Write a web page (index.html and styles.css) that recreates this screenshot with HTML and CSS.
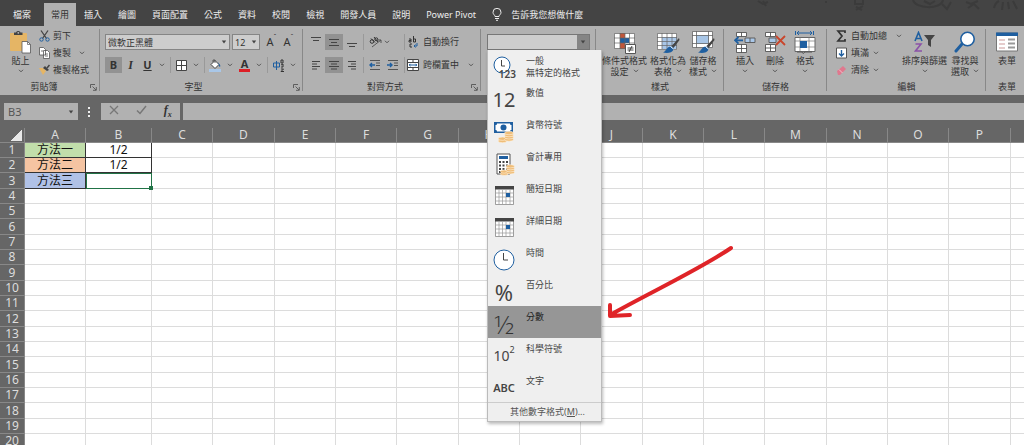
FILE: index.html
```html
<!DOCTYPE html>
<html lang="zh-Hant">
<head>
<meta charset="utf-8">
<meta name="viewport" content="width=device-width, initial-scale=1">
<title>試算表</title>
<link rel="stylesheet" href="styles.css">
</head>
<body>
<svg class="defs" aria-hidden="true">
  <symbol id="caret" viewBox="0 0 6 4"><path d="M1 .8l2 2 2-2" fill="none" stroke="#555" stroke-width="1"/></symbol>
  <symbol id="solid-caret" viewBox="0 0 6 4"><path d="M.8.6h4.4L3 3.4z" fill="#444"/></symbol>
  <symbol id="launcher" viewBox="0 0 7 7"><path d="M.5 4V.5H5M2.5 2.5l3.5 3.5M6.300 3v3.300H3" fill="none" stroke="#555" stroke-width=".9"/></symbol>
  <symbol id="coins" viewBox="0 0 16 12"><g fill="#efbd78" stroke="#fff1dc" stroke-width=".6"><ellipse cx="4.500" cy="10" rx="4.200" ry="1.700"/><ellipse cx="4.500" cy="7.700" rx="4.200" ry="1.700"/><ellipse cx="11" cy="8.500" rx="4.400" ry="1.700"/><ellipse cx="11" cy="6.300" rx="4.400" ry="1.700"/><ellipse cx="11" cy="4.100" rx="4.400" ry="1.700"/><ellipse cx="11" cy="2" rx="4.400" ry="1.700"/></g></symbol>
  <symbol id="calendar" viewBox="0 0 19 19"><path d="M.5.5h18v18H.5z" fill="#fff" stroke="#777" stroke-width=".7"/><path d="M0 0h19v3.500H0z" fill="#444"/><path d="M4 4v14M7.500 4v14M11 4v14M15 4v14M1 7h17M1 11h17M1 15h17" stroke="#999" stroke-width=".7"/><path d="M11 7h4v4h-4z" fill="#1f5fa0"/></symbol>
  <symbol id="brush" viewBox="0 0 18 17"><path d="M17 1l-7.500 8 2 2L17.500 3z" fill="#444"/><path d="M9 9.500c1.500 0 3 1.500 2.500 3C10.500 16 5 16.500 1 15.500c3-1 3.500-6 8-6z" fill="#1f5fa0"/><path d="M8.500 9.500l3 2.500" stroke="#fff" stroke-width="1"/></symbol>
</svg>

<header class="titlebar">
  <nav class="tabs" aria-label="功能區索引標籤">
    <button class="tab tab-file">檔案</button><button class="tab tab-active">常用</button><button class="tab">插入</button><button class="tab">繪圖</button><button class="tab">頁面配置</button><button class="tab">公式</button><button class="tab">資料</button><button class="tab">校閱</button><button class="tab">檢視</button><button class="tab">開發人員</button><button class="tab">說明</button><button class="tab">Power Pivot</button>
    <button class="tab tell"><svg width="10" height="13" viewBox="0 0 10 13" fill="none" stroke="#eee"><path d="M3 8.500C3 7 1 6.500 1 4.300a4 4 0 018 0C9 6.500 7 7 7 8.500zM3 10.500h4M4 12.300h2"/></svg>告訴我您想做什麼</button>
  </nav>
  <svg class="doodles" width="270" height="12" viewBox="0 0 270 12" fill="none" stroke="#3b3b3b" stroke-width="2" aria-hidden="true"><path d="M4 1l5 3 5-2M9 1l3 5M71 2h2M101 0v4h8V0M102 7l6 3M109 6l-7 4M159 0c2 9 28 10 30 0M170 1l6 3 5-3M188 4l5 5 4-7M212 2l5 2 7-3M214 8l6-4 5 5M240 8c1-5 3-6 5-7M248 10l1-8M255 9l-1-7M263 9l-4-8"/></svg>
</header>

<section class="ribbon" aria-label="功能區">
  <div class="group g-clipboard">
    <div class="body">
      <button class="big paste"><svg width="22" height="23" viewBox="0 0 22 23"><rect y="2" width="17" height="18" rx="1" fill="#e5b565"/><path d="M4 4V1.500h2C6.500-.5 10-.5 10.500 1.500h2V4z" fill="#444"/><circle cx="8.300" cy="1.800" r=".9" fill="#bbb"/><path d="M12 10.500h5.500l3 3v8.500H12z" fill="#fff" stroke="#555" stroke-width=".8"/><path d="M17.500 10.500v3h3" fill="none" stroke="#555" stroke-width=".7"/></svg><span>貼上</span><svg class="caret"><use href="#caret"/></svg></button>
      <div class="stack">
        <button class="small"><svg width="11" height="12" viewBox="0 0 11 12" fill="none"><path d="M2 .5l5.500 8M9 .5L3.500 8.500" stroke="#444" stroke-width="1.300"/><circle cx="2.500" cy="9.500" r="1.700" stroke="#1f5fa0"/><circle cx="8.500" cy="9.500" r="1.700" stroke="#1f5fa0"/></svg>剪下</button>
        <button class="small"><svg width="11" height="12" viewBox="0 0 11 12" fill="#fff" stroke="#555" stroke-width=".8"><path d="M.5.500h4l2 2V8h-6zM4.500 3.500h4l2 2v6h-6z"/><path d="M6 7h3M6 9h3M2 4h2"/></svg>複製<svg class="caret spaced"><use href="#caret"/></svg></button>
        <button class="small"><svg width="11" height="12" viewBox="0 0 11 12"><path d="M0 4l4 0 3 3-3 4z" fill="#e5b565"/><path d="M4 4l2-2 4 4-2 1z" fill="#444"/><path d="M8 4l2.500-3" stroke="#444" stroke-width="1.500"/></svg>複製格式</button>
      </div>
    </div>
    <div class="caption">剪貼簿<svg class="launcher"><use href="#launcher"/></svg></div>
  </div>

  <div class="group g-font">
    <div class="body rows">
      <div class="row">
        <div class="combo font-name"><input aria-label="字型" value="微軟正黑體"><svg class="caret"><use href="#solid-caret"/></svg></div>
        <div class="combo font-size"><input aria-label="字型大小" value="12"><svg class="caret"><use href="#solid-caret"/></svg></div>
        <button class="tool grow" aria-label="放大字型">A<sup>ˆ</sup></button><button class="tool shrink" aria-label="縮小字型">A<sup>ˇ</sup></button>
      </div>
      <div class="row">
        <button class="tool on"><b>B</b></button><button class="tool"><i>I</i></button><button class="tool"><u>U</u></button><svg class="caret pad"><use href="#caret"/></svg><span class="rule"></span>
        <button class="tool" aria-label="框線"><svg width="11" height="11" viewBox="0 0 11 11"><path d="M.5.5h10v10H.5zM5.500.5v10M.5 5.500h10" fill="#fff" stroke="#444"/></svg></button><svg class="caret pad"><use href="#caret"/></svg><span class="rule"></span>
        <button class="tool" aria-label="填滿色彩"><svg width="13" height="13" viewBox="0 0 13 13"><path d="M2 5.500L6 1.500l4 4-4 4z" fill="#fff" stroke="#444"/><path d="M4 3V1h2v3" fill="none" stroke="#444" stroke-width=".8"/><path d="M9 3l2.500 4-1 1z" fill="#1f5fa0"/><path d="M0 10h12v3H0z" fill="#a9c7e8"/></svg></button><svg class="caret pad"><use href="#caret"/></svg>
        <button class="tool font-color"><b>A</b></button><svg class="caret pad"><use href="#caret"/></svg><span class="rule"></span>
        <button class="tool phonetic" aria-label="注音"><svg width="12" height="13" viewBox="0 0 12 13" fill="none"><path d="M.5 4h6v4h-6zM3.500 2v9" stroke="#1f5fa0"/><path d="M8 1h2v3H8zM8 6l2-1v3H8M8 10h2.500L8 12.500H11" stroke="#333"/></svg></button><svg class="caret pad"><use href="#caret"/></svg>
      </div>
    </div>
    <div class="caption">字型<svg class="launcher"><use href="#launcher"/></svg></div>
  </div>

  <div class="group g-align">
    <div class="body rows">
      <div class="row">
        <button class="tool" aria-label="靠上對齊"><svg width="12" height="12" viewBox="0 0 12 12"><path d="M1 1.500h10M3 4.500h6" stroke="#444"/></svg></button><button class="tool on" aria-label="置中對齊"><svg width="12" height="12" viewBox="0 0 12 12"><path d="M1 3.500h10M3 6.500h6M1 9.500h10" stroke="#444"/></svg></button><button class="tool" aria-label="靠下對齊"><svg width="12" height="12" viewBox="0 0 12 12"><path d="M1 7.500h10M3 10.500h6" stroke="#444"/></svg></button><span class="rule"></span>
        <button class="tool" aria-label="方向"><svg width="13" height="12" viewBox="0 0 13 12" fill="none" stroke="#333"><circle cx="3" cy="5.500" r="1.800"/><path d="M2 2.500l4 4M5 1l4 5"/><circle cx="7.300" cy="3.300" r="1.500"/><path d="M3 11l9-7M9 4h3v3" stroke="#555"/></svg></button><svg class="caret"><use href="#caret"/></svg><span class="rule late"></span>
        <button class="small wrap"><svg width="12" height="12" viewBox="0 0 12 12" fill="none" stroke="#333"><path d="M2 3h2v3H2V4.500h2M6.500 0v6h2V3h-2M5 8H3v3h2"/><path d="M7 10h3V7M8.500 8.500L7 10l1.500 1.500" stroke="#1f5fa0"/></svg>自動換行</button>
      </div>
      <div class="row">
        <button class="tool" aria-label="靠左"><svg width="12" height="12" viewBox="0 0 12 12"><path d="M2 2.500h8M2 5h5M2 7.500h8M2 10h5" stroke="#444"/></svg></button><button class="tool on" aria-label="置中"><svg width="12" height="12" viewBox="0 0 12 12"><path d="M1 2.500h10M3 5h6M1 7.500h10M3 10h6" stroke="#444"/></svg></button><button class="tool" aria-label="靠右"><svg width="12" height="12" viewBox="0 0 12 12"><path d="M2 2.500h8M5 5h5M2 7.500h8M5 10h5" stroke="#444"/></svg></button><span class="rule"></span>
        <button class="tool" aria-label="減少縮排"><svg width="12" height="12" viewBox="0 0 12 12" fill="none"><path d="M1 1.500h10M7 4h4M7 6.500h4M1 10.500h10" stroke="#555"/><path d="M6 6H1M3 4L1 6l2 2" stroke="#1f5fa0" stroke-width="1.400"/></svg></button><button class="tool" aria-label="增加縮排"><svg width="12" height="12" viewBox="0 0 12 12" fill="none"><path d="M1 1.500h10M7 4h4M7 6.500h4M1 10.500h10" stroke="#555"/><path d="M0 6h5M3 4l2 2-2 2" stroke="#1f5fa0" stroke-width="1.400"/></svg></button><span class="rule"></span>
        <button class="small wrap"><svg width="12" height="12" viewBox="0 0 12 12" fill="none"><path d="M.5.5h11v11H.5z" fill="#fff" stroke="#444"/><path d="M.5 3.500h11M.5 8.500h11M6 .5v3M6 8.500v3" stroke="#444"/><path d="M2 6h8M3.500 4.800L2.300 6l1.200 1.200M8.500 4.800L9.700 6 8.500 7.200" stroke="#1f5fa0"/></svg>跨欄置中<svg class="caret spaced"><use href="#caret"/></svg></button>
      </div>
    </div>
    <div class="caption">對齊方式<svg class="launcher"><use href="#launcher"/></svg></div>
  </div>

  <div class="group g-number">
    <div class="body rows">
      <div class="combo number-format"><input aria-label="數值格式" value=""><button class="drop" aria-label="展開"><svg class="caret"><use href="#solid-caret"/></svg></button>
        <div class="menu" role="menu">
          <button class="item" role="menuitem"><span class="pic"><svg width="24" height="26" viewBox="0 0 24 26"><circle cx="10" cy="10" r="8" fill="#fff" stroke="#1f5fa0"/><path d="M9.500 5v6H13" fill="none" stroke="#444"/></svg><span class="t123">123</span></span><span class="name">一般<small>無特定的格式</small></span></button>
          <button class="item" role="menuitem"><span class="pic t12">12</span><span class="name">數值</span></button>
          <button class="item" role="menuitem"><span class="pic"><svg width="22" height="24" viewBox="0 0 22 24"><path d="M1 2h19v11H1z" fill="#1f5fa0"/><path d="M4 3.500h13c0 1 .5 1.500 1.500 1.500v5c-1 0-1.500.5-1.500 1.500H4C4 10.500 3.500 10 2.500 10V5C3.500 5 4 4.500 4 3.500z" fill="#fff"/><circle cx="10.500" cy="7.500" r="3" fill="#1f5fa0"/><use href="#coins" x="5" y="11" width="16" height="12"/></svg></span><span class="name">貨幣符號</span></button>
          <button class="item" role="menuitem"><span class="pic"><svg width="22" height="24" viewBox="0 0 22 24"><path d="M4 2h13v20H4z" fill="#fff" stroke="#555"/><path d="M6 4h9v3H6z" fill="#1f5fa0"/><path d="M6 10h10M6 13.500h10M6 17h10M6 20h10" stroke="#444" stroke-width="2" stroke-dasharray="2 1.500"/><use href="#coins" x="7" y="12" width="15" height="12"/></svg></span><span class="name">會計專用</span></button>
          <button class="item" role="menuitem"><span class="pic"><svg width="19" height="19"><use href="#calendar"/></svg></span><span class="name">簡短日期</span></button>
          <button class="item" role="menuitem"><span class="pic"><svg width="19" height="19"><use href="#calendar"/></svg></span><span class="name">詳細日期</span></button>
          <button class="item" role="menuitem"><span class="pic"><svg width="22" height="22" viewBox="0 0 22 22"><circle cx="11" cy="11" r="10" fill="#fff" stroke="#1f5fa0"/><path d="M10.500 4v7H15" fill="none" stroke="#444"/></svg></span><span class="name">時間</span></button>
          <button class="item" role="menuitem"><span class="pic pct">%</span><span class="name">百分比</span></button>
          <button class="item current" role="menuitem"><span class="pic half">½</span><span class="name">分數</span></button>
          <button class="item" role="menuitem"><span class="pic sci">10<sup>2</sup></span><span class="name">科學符號</span></button>
          <button class="item" role="menuitem"><span class="pic abc">ABC</span><span class="name">文字</span></button>
          <button class="more" role="menuitem">其他數字格式(<u>M</u>)...</button>
        </div>
      </div>
    </div>
  </div>

  <div class="group g-styles">
    <div class="body">
      <button class="big"><svg width="22" height="23" viewBox="0 0 22 23"><path d="M.5 2.500h20v15H.5z" fill="#fff"/><path d="M6 2h5v5H6zM6 12h5v6H6z" fill="#c0563a"/><path d="M6 7h9v5H6z" fill="#1f5fa0"/><path d="M.5 2.500h20v15H.5zM6 2v16M11 2v16M15.500 2v16M0 7h21M0 12h21" fill="none" stroke="#666" stroke-width=".7"/><path d="M11.500 13.500h10v9h-10z" fill="#fff" stroke="#555"/><path d="M13.500 17h6M13.500 19h6M18 15l-3 6" stroke="#333" stroke-width=".9"/></svg><span>條件式格式<br>設定<svg class="caret"><use href="#caret"/></svg></span></button>
      <button class="big"><svg width="23" height="23" viewBox="0 0 23 23"><path d="M.5 2.500h19v16H.5z" fill="#fff"/><path d="M5 6h15v12H5z" fill="#a9c7e8"/><path d="M.5 2.500h19v16H.5zM5 2v16M10 2v16M15 2v16M0 6.500h20M0 10.500h20M0 14.500h20" fill="none" stroke="#666" stroke-width=".7"/><use href="#brush" x="5" y="6" width="18" height="17"/></svg><span>格式化為<br>表格<svg class="caret"><use href="#caret"/></svg></span></button>
      <button class="big"><svg width="23" height="23" viewBox="0 0 23 23"><path d="M.5.5h20v16H.5z" fill="#fff"/><path d="M4 4h13v9H4z" fill="#a9c7e8"/><path d="M.5.5h20v16H.5zM4.500 0v17M16.500 0v17M0 4.500h21M0 12.500h21" fill="none" stroke="#666" stroke-width=".8"/><use href="#brush" x="5" y="6" width="18" height="17"/></svg><span>儲存格<br>樣式<svg class="caret"><use href="#caret"/></svg></span></button>
    </div>
    <div class="caption">樣式</div>
  </div>

  <div class="group g-cells">
    <div class="body">
      <button class="big"><svg width="22" height="23" viewBox="0 0 22 23"><path d="M2.500 1.500h10v4h-10zM2.500 13.500h10v8h-10zM7.500 1v5M7.500 13v9M2 17.500h11" fill="#fff" stroke="#555" stroke-width=".9"/><path d="M11 7h10v4.500H11zM16 7v4.500" fill="#a9c7e8" stroke="#555" stroke-width=".9"/><path d="M9 9.300H1M4.500 6L1 9.300l3.500 3.300" fill="none" stroke="#1f5fa0" stroke-width="1.800"/></svg><span>插入</span><svg class="caret"><use href="#caret"/></svg></button>
      <button class="big"><svg width="22" height="23" viewBox="0 0 22 23"><path d="M1.500 1.500h10v4h-10zM1.500 13.500h10v7h-10zM6.500 1v5M6.500 13v8M1 17h11" fill="#fff" stroke="#555" stroke-width=".9"/><path d="M5 7h7v4.500H5z" fill="#a9c7e8" stroke="#555" stroke-width=".9"/><path d="M12 5l9 9M21 5l-9 9" stroke="#c9462c" stroke-width="1.800"/></svg><span>刪除</span><svg class="caret"><use href="#caret"/></svg></button>
      <button class="big"><svg width="22" height="23" viewBox="0 0 22 23"><path d="M3 2h15M5 0L3 2l2 2M16 0l2 2-2 2M1.500 0v4M19.500 0v4" fill="none" stroke="#1f5fa0"/><path d="M1 6.500h20v14H1z" fill="#fff" stroke="#666"/><path d="M6 6v15M15 6v15M1 10h20M1 16h20" stroke="#777" stroke-width=".7"/><path d="M6 10h7v7H6z" fill="#1f5fa0"/><path d="M3 21h5l1 1.500 2-1.500h7" fill="none" stroke="#555"/></svg><span>格式</span><svg class="caret"><use href="#caret"/></svg></button>
    </div>
    <div class="caption">儲存格</div>
  </div>

  <div class="group g-edit">
    <div class="body">
      <div class="stack">
        <button class="small"><svg width="11" height="12" viewBox="0 0 11 12"><path d="M9 3V1H2l4 5-4 5h7V9" fill="none" stroke="#333" stroke-width="1.700"/></svg>自動加總<svg class="caret spaced"><use href="#caret"/></svg></button>
        <button class="small"><svg width="11" height="12" viewBox="0 0 11 12"><path d="M.5 1h10v10H.5z" fill="#fff" stroke="#555"/><path d="M5.500 3v6M3 6.500L5.500 9 8 6.500" fill="none" stroke="#1f5fa0" stroke-width="1.400"/></svg>填滿<svg class="caret"><use href="#caret"/></svg></button>
        <button class="small"><svg width="11" height="12" viewBox="0 0 11 12"><path d="M1 7l6-5 3 3-6 6H2z" fill="#e0788e"/><path d="M3 5.500l3.500 3.500" stroke="#f3c3cc"/></svg>清除<svg class="caret"><use href="#caret"/></svg></button>
      </div>
      <button class="big sort"><svg width="22" height="23" viewBox="0 0 22 23" fill="none" stroke-width="1.600"><path d="M1 10L4.500 1.500 8 10M2.200 7.500h4.600" stroke="#1f5fa0"/><path d="M1.500 13H7l-5.500 7H8" stroke="#8b52a8"/><path d="M10 4h11l-4 5v7l-3-2V9z" fill="#444"/></svg><span>排序與篩選</span><svg class="caret"><use href="#caret"/></svg></button>
      <button class="big"><svg width="22" height="23" viewBox="0 0 22 23"><path d="M8 13L2 20" stroke="#1f5fa0" stroke-width="3" stroke-linecap="round"/><circle cx="13.500" cy="8" r="6.700" fill="#fff" stroke="#1f5fa0" stroke-width="1.600"/></svg><span>尋找與<br>選取<svg class="caret"><use href="#caret"/></svg></span></button>
    </div>
    <div class="caption">編輯</div>
  </div>

  <div class="group g-form">
    <div class="body"><button class="big"><svg width="22" height="23" viewBox="0 0 22 23"><path d="M.5 2h21v18H.5z" fill="#fff" stroke="#777"/><path d="M0 1.500h22V5H0z" fill="#1f5fa0"/><path d="M3 9h6M3 13h6M3 17h6" stroke="#c99" /><path d="M12 8.500h7M12 12.500h7M12 16.500h7" stroke="#999" stroke-width="2"/></svg><span>表單</span></button></div>
    <div class="caption">表單</div>
  </div>
</section>

<section class="formula-bar" aria-label="資料編輯列">
  <div class="name-box"><input aria-label="名稱方塊" value="B3"><svg class="caret"><use href="#solid-caret"/></svg></div>
  <span class="dots"></span>
  <div class="fx-tools">
    <button aria-label="取消"><svg width="10" height="10" viewBox="0 0 10 10"><path d="M1 1l8 8M9 1L1 9" stroke="#777" stroke-width="1.300"/></svg></button>
    <button aria-label="輸入"><svg width="11" height="10" viewBox="0 0 11 10"><path d="M1 5.500L4 8.500 10 1" fill="none" stroke="#777" stroke-width="1.500"/></svg></button>
    <button class="fx">f<sub>x</sub></button>
  </div>
  <input class="formula" aria-label="公式" value="">
</section>

<main class="sheet">
  <table id="grid"></table>
  <svg class="arrow" width="128" height="78" viewBox="0 0 128 78" fill="none" stroke="#df2428" stroke-width="4" stroke-linecap="round" stroke-linejoin="round" aria-hidden="true"><path d="M125 4C96 24 45 48 4 71M4 61v11l20-1"/></svg>
</main>
<script src="grid.js"></script>
</body>
</html>
```

FILE: styles.css
```css
* { box-sizing: border-box; }
html, body { height: 100%; }
body {
  margin: 0;
  display: flex;
  flex-direction: column;
  overflow: hidden;
  background: #666;
  color: #333;
  font: 9px/12px "Noto Sans", "Noto Sans CJK TC", sans-serif;
}
button, input { font: inherit; color: inherit; margin: 0; padding: 0; border: 0; background: none; }
input { min-width: 0; outline: 0; }
button { white-space: nowrap; }
svg { flex: none; }
.defs { position: absolute; width: 0; height: 0; }
.caret { width: 6px; height: 4px; }

/* Title bar */
.titlebar { flex: none; display: flex; justify-content: space-between; height: 26px; background: #444; overflow: hidden; }
.tabs { display: flex; padding-top: 3px; }
.tab { padding: 0 8px; color: #eee; height: 23px; }
.tab-file { padding: 0 13px; }
.tab-active { padding: 0 7px; background: #b1b1b1; color: #333; }
.tell { display: flex; align-items: center; gap: 9px; }

/* Ribbon */
.ribbon { flex: none; display: flex; height: 69px; background: #b1b1b1; }
.group { flex: none; position: relative; display: flex; flex-direction: column; padding-top: 4px; }
.group:not(:last-child)::after { content: ""; position: absolute; right: 0; top: 3px; bottom: 4px; width: 1px; background: #888; }
.body { display: flex; height: 51px; }
.rows { flex-direction: column; gap: 7px; padding-top: 4px; }
.caption { display: flex; justify-content: center; align-items: center; position: relative; }
.launcher { position: absolute; right: 3px; bottom: 2px; width: 7px; height: 7px; }
.g-clipboard { width: 100px; }
.g-clipboard .caption { padding-right: 12px; }
.g-font { width: 203px; }
.g-font .caption { padding-right: 16px; }
.g-align { width: 178px; }
.g-align .caption { padding-right: 14px; }
.g-number { width: 115px; }
.g-styles { width: 128px; }
.g-cells { width: 103px; }
.g-edit { width: 159px; }
.g-form { flex: 1; }

.big { display: flex; flex-direction: column; align-items: center; line-height: 11px; }
.big > svg:first-child { margin: 1px 0 0; }
.big > span { margin-top: 1px; }
.big > .caret { margin-top: 3px; }
.big span .caret { margin: 0 0 2px 4px; }
.stack { display: flex; flex-direction: column; gap: 5px; }
.small { display: flex; align-items: center; gap: 4px; height: 12px; }
.small .spaced { margin-left: 5px; }
.paste { width: 39px; padding-left: 2px; }
.g-clipboard .small { gap: 3px; }
.g-styles .body { padding-left: 6px; gap: 3px; }
.g-cells .body { padding-left: 10px; gap: 8px; }
.g-edit .body { padding-left: 9px; gap: 4px; }
.g-edit .stack { width: 62px; }
.g-form .body { padding-left: 10px; }
.g-form .caption { justify-content: flex-start; padding-left: 12px; }

.row { display: flex; align-items: center; height: 16px; }
.tool { width: 17px; height: 16px; display: flex; align-items: center; justify-content: center; font-size: 11px; }
.tool.on { background: #929292; }
.tool i { font: italic bold 12px "Liberation Serif", serif; }
.tool u { font-weight: bold; }
.pad { margin: 0 3px; }
.rule { width: 1px; height: 16px; margin: 0 3px; background: #999; }
.combo { display: flex; align-items: center; height: 16px; border: 1px solid #858585; background: #cdcdcd; }
.combo > input { flex: 1; height: 14px; padding-left: 2px; }
.combo > .caret { margin-right: 2px; }
.g-font .body { padding-left: 5px; }
.g-font .row .rule { margin: 0 2px; }
.g-align .body { padding-left: 4px; }
.font-name { width: 125px; margin-right: 2px; }
.font-size { width: 28px; }
.tool sup { font-size: 7px; line-height: 6px; align-self: flex-start; }
.grow { margin-left: 3px; }
.font-color b { line-height: 10px; border-bottom: 3px solid #dd1f26; padding: 0 2px; }
.g-align .tool { width: 18px; }
.g-align .rule { margin: 0 2px; }
.g-align .rule.late { margin-left: 14px; }
.wrap .spaced { margin-left: 5px; }

/* Number format drop-down */
.g-number .body { padding-left: 6px; }
.number-format { position: relative; width: 103px; border-color: #777; }
.drop { width: 12px; height: 14px; background: #858585; display: flex; align-items: center; justify-content: center; }
.menu {
  position: absolute; z-index: 2; top: 15px; left: -1px; width: 115px;
  display: flex; flex-direction: column;
  background: #efefef; border: 1px solid #bbb; border-top: 0;
  box-shadow: 1px 2px 3px #0004;
}
.item { display: flex; height: 32px; text-align: left; color: #444; }
.item.current { background: #969696; color: #222; }
.pic { width: 32px; height: 32px; padding-top: 3px; display: flex; align-items: center; justify-content: center; position: relative; line-height: 24px; }
.name { padding: 5px 0 0 6px; }
.name small { display: block; font-size: 9px; }
.t123 { position: absolute; right: 4px; bottom: 3px; font-size: 10px; font-weight: 600; line-height: 10px; }
.t12 { font-size: 20px; }
.pct { font-size: 22px; }
.half { font-family: "Open Sans", "Noto Sans", sans-serif; font-size: 26px; font-weight: 300; color: #333; }
.sci { font-size: 14px; }
.sci sup { font-size: 9px; align-self: flex-start; line-height: 18px; }
.abc { font-size: 11px; font-weight: 600; }
.more { height: 19px; border-top: 1px solid #ccc; padding-left: 6px; color: #555; }

/* Formula bar */
.formula-bar { flex: none; display: flex; height: 33px; padding: 8px 0 7px 4px; }
.name-box, .fx-tools, .formula { background: #b1b1b1; height: 17px; }
.name-box { width: 74px; display: flex; align-items: center; font-size: 11px; color: #555; padding: 0 4px; }
.name-box input { flex: 1; }
.dots { width: 2px; margin: 4px 11px 4px 10px; border-left: 2px dotted #eee; }
.fx-tools { width: 79px; display: flex; align-items: center; justify-content: space-around; margin-right: 3px; }
.fx { font: italic bold 12px "Liberation Serif", serif; }
.fx sub { font-size: 8px; }
.formula { flex: 1; }

/* Sheet */
.sheet { flex: 1; min-height: 0; position: relative; overflow: hidden; }
#grid { table-layout: fixed; width: 1071px; border-collapse: separate; border-spacing: 0; font-size: 12px; line-height: 14px; background: #fff; }
#grid th { height: 15px; padding: 0; font-weight: 400; color: #ddd; background: #666; border-right: 1px solid #888; border-bottom: 1px solid #888; }
#grid td { padding: 0; text-align: center; color: #111; border-right: 1px solid #dcdcdc; border-bottom: 1px solid #dcdcdc; }
#grid tr.tall th { height: 16px; }
#grid .corner { background: linear-gradient(135deg, #666 50%, #e8e8e8 50%) right 2px bottom 1px / 11px 11px no-repeat #666; }
#grid td.filled { border-color: #333; }
#grid td.green { background: #c1deab; }
#grid td.orange { background: #f5c4a2; }
#grid td.blue { background: #b0c1e6; }
#grid td.selected { position: relative; outline: 1px solid #217346; outline-offset: -1px; border-color: #217346; }
#grid td.selected::after { content: ""; position: absolute; right: -2px; bottom: -2px; width: 4px; height: 4px; background: #217346; }
.arrow { position: absolute; left: 606px; top: 116px; }
```

FILE: grid.js
```js
const columns = "ABCDEFGHIJKLMNOPQ".split("");
const widths = [61, 66];
const cells = {
  A1: ["方法一", "filled green"], B1: ["1/2", "filled"],
  A2: ["方法二", "filled orange"], B2: ["1/2", "filled"],
  A3: ["方法三", "filled blue"], B3: ["", "selected"]
};
const grid = document.getElementById("grid");

const group = document.createElement("colgroup");
[25, ...columns.map((_, i) => widths[i] || (i % 3 === 0 ? 62 : 61))].forEach(w => {
  const col = document.createElement("col");
  col.style.width = w + "px";
  group.append(col);
});
grid.append(group);

const head = grid.createTHead().insertRow();
["", ...columns].forEach((letter, i) => {
  const th = document.createElement("th");
  th.textContent = letter;
  if (i === 0) th.className = "corner";
  head.append(th);
});

const body = grid.createTBody();
for (let n = 1; n <= 20; n++) {
  const row = body.insertRow();
  if (n % 3 === 0) row.className = "tall";
  const th = document.createElement("th");
  th.textContent = n;
  row.append(th);
  columns.forEach(letter => {
    const td = row.insertCell();
    const [text, style] = cells[letter + n] || ["", ""];
    td.textContent = text;
    td.className = style;
  });
}
```
